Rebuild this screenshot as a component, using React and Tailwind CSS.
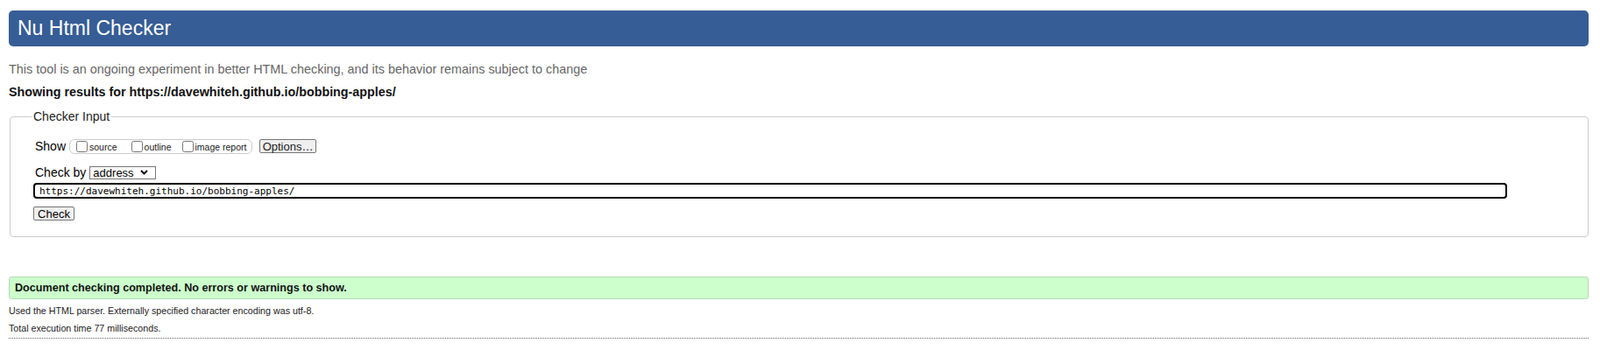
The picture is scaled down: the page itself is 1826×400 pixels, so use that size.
import React from 'react';

const options = [
  { id: 'source', label: 'source', gap: '' },
  { id: 'outline', label: 'outline', gap: 'ml-[16px]' },
  { id: 'image', label: 'image report', gap: 'ml-[12px]' },
];

const App = () => {
  return (
    <div className="min-h-[400px] bg-white pl-[10px] pr-[13px] pt-[12px] font-['Liberation_Sans',Arial,sans-serif] text-black">
      {/* Title bar */}
      <h1 className="flex h-[41px] items-center rounded-[5px] bg-[#365d95] pl-[10px] text-[23px] leading-none text-white">
        Nu Html Checker
      </h1>

      <p className="mt-[18px] text-[14.4px] leading-[16px] text-[#666666]">
        This tool is an ongoing experiment in better HTML checking, and its behavior remains subject to change
      </p>
      <p className="mt-[10px] text-[14.3px] font-bold leading-[16px] text-[#111111]">
        Showing results for https://davewhiteh.github.io/bobbing-apples/
      </p>

      {/* Checker input */}
      <fieldset className="ml-[1px] mt-[12px] rounded-[4px] border border-[#cccccc] pb-[18px] pl-[24px] pr-[24px] pt-[17px]">
        <legend className="px-[2px] text-[14px] leading-[16px] text-[#222222]">Checker Input</legend>

        <div className="ml-[4px] flex h-[18px] items-center">
          <span className="text-[14px] leading-none">Show</span>
          <div className="ml-[4px] flex h-[17px] w-[209px] items-center rounded-[6px] border border-[#cccccc] pl-[7px]">
            {options.map((o) => (
              <label key={o.id} className={`flex items-center ${o.gap}`}>
                <input type="checkbox" className="m-0 h-[13px] w-[13px]" />
                <span className="ml-[2px] pt-[3px] text-[10.5px] leading-none text-[#222222]">{o.label}</span>
              </label>
            ))}
          </div>
          <button className="ml-[8px] h-[16px] w-[65px] rounded-[2px] border border-[#767676] bg-[#efefef] text-[13px] leading-none text-[#222222]">
            Options…
          </button>
        </div>

        <div className="ml-[4px] mt-[13px] flex h-[16px] items-center">
          <span className="text-[14px] leading-none">Check by</span>
          <div className="ml-[4px] flex h-[15px] w-[76px] items-center border border-[#767676] pl-[3px] pr-[8px]">
            <select className="h-full flex-1 appearance-none text-[13px] leading-none outline-none">
              <option>address</option>
            </select>
            <svg width="9" height="6" viewBox="0 0 9 6" className="shrink-0">
              <path d="M1 1l3.5 3.5L8 1" fill="none" stroke="#000" strokeWidth="1.8" />
            </svg>
          </div>
        </div>

        <input
          type="text"
          defaultValue="https://davewhiteh.github.io/bobbing-apples/"
          className="ml-[2px] mt-[4px] block h-[18px] w-[1682px] rounded-[4px] border-2 border-black px-[5px] font-['DejaVu_Sans_Mono','Liberation_Mono',monospace] text-[11px] leading-none outline-none"
        />

        <button className="ml-[2px] mt-[9px] block h-[16px] w-[47px] rounded-[2px] border border-[#767676] bg-[#efefef] text-[13px] leading-none">
          Check
        </button>
      </fieldset>

      {/* Result */}
      <div className="mt-[45px] flex h-[26px] items-center rounded-[3px] border border-[#b3dcb3] bg-[#ccffcc] pl-[6px] text-[12.6px] font-bold text-[#111111]">
        Document checking completed. No errors or warnings to show.
      </div>

      <p className="mt-[7px] text-[10.7px] leading-[12px] text-[#222222]">
        Used the HTML parser. Externally specified character encoding was utf-8.
      </p>
      <p className="mt-[8px] border-b border-dotted border-[#666666] pb-[5px] text-[10.7px] leading-[12px] text-[#222222]">
        Total execution time 77 milliseconds.
      </p>
    </div>
  );
};

export default App;
